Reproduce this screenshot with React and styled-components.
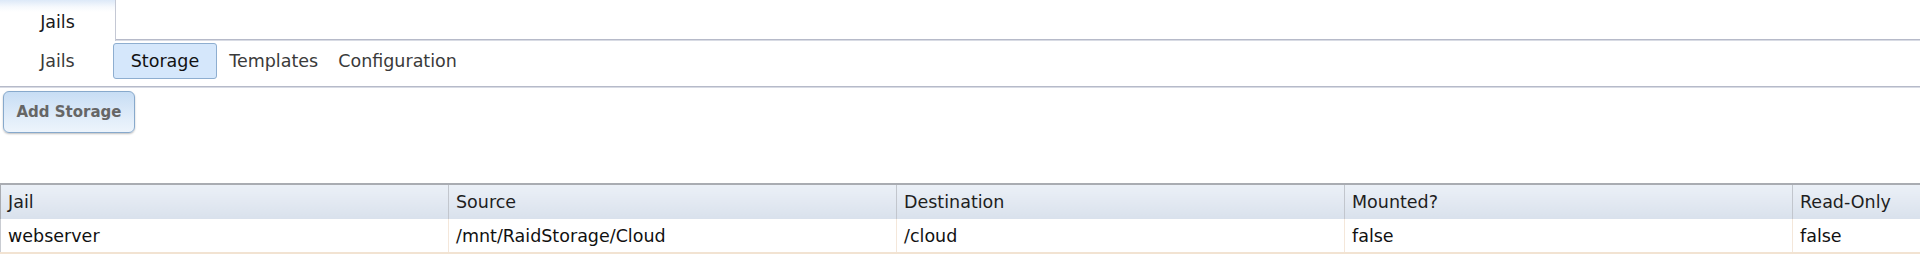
import React from 'react';
import styled, { createGlobalStyle } from 'styled-components';

const GlobalStyle = createGlobalStyle`
  html, body {
    margin: 0;
    padding: 0;
    background: #fff;
    overflow: hidden;
  }
  body {
    font-family: "DejaVu Sans", Verdana, sans-serif;
    font-size: 17.5px;
    color: #222;
  }
`;

const Page = styled.div`
  width: 1920px;
  height: 264px;
  overflow: hidden;
`;

const TabStrip = styled.div`
  display: flex;
  height: 41px;
`;

const Tab = styled.div`
  width: 116px;
  display: flex;
  align-items: center;
  justify-content: center;
  padding-top: 2px;
  box-sizing: border-box;
  border-right: 1px solid #c4c8d4;
  background: linear-gradient(#dde9f8 0px, #f6f9fd 7px, #fff 12px);
  color: #1a1a1a;
`;

const TabFill = styled.div`
  flex: 1;
  border-bottom: 1px solid #b6bac9;
  box-shadow: 0 1px 0 #d8dbe4;
  margin-bottom: 1px;
`;

const SubNav = styled.nav`
  display: flex;
  align-items: flex-start;
  height: 46px;
  padding: 2px 0 0 30px;
  box-sizing: border-box;
  border-bottom: 1px solid #b6bac9;
  box-shadow: 0 1px 0 #d8dbe4;
`;

const NavItem = styled.div`
  height: 36px;
  line-height: 35px;
  box-sizing: border-box;
  padding: 0 ${p => (p.$active ? '17px' : '9px')};
  margin-left: ${p => p.$gap || 0}px;
  color: ${p => (p.$active ? '#111' : '#3a3a3a')};
  border: 1px solid ${p => (p.$active ? '#8eaed0' : 'transparent')};
  border-radius: 3px;
  background: ${p => (p.$active ? '#d5e7fb' : 'transparent')};
`;

const Toolbar = styled.div`
  padding: 4px 0 0 3px;
  height: 96px;
  box-sizing: border-box;
`;

const AddButton = styled.button`
  width: 132px;
  height: 42px;
  font-family: inherit;
  font-size: 15px;
  font-weight: bold;
  color: #666;
  border: 1px solid #87a9cc;
  border-radius: 6px;
  background: linear-gradient(#c7ddf4, #e3eefa 70%, #edf4fc);
  box-shadow: 0 1px 2px rgba(0, 0, 0, 0.25);
  padding: 0;
`;

const Table = styled.table`
  border-collapse: collapse;
  table-layout: fixed;
  width: 2240px;
`;

const Th = styled.th`
  height: 34px;
  padding: 0 7px;
  text-align: left;
  font-weight: normal;
  color: #1e1e1e;
  background: linear-gradient(#ebf0f7, #d9e1ec);
  border-top: 2px solid #a9acb2;
  border-right: 1px solid #c2c6cd;
  &:first-child {
    border-left: 1px solid #a9acb2;
  }
`;

const Td = styled.td`
  height: 33px;
  padding: 0 7px;
  color: #111;
  border-bottom: 2px solid #f2e3d2;
  border-right: 1px solid #f4e7da;
  &:first-child {
    border-left: 1px solid #c9ccd2;
  }
`;

const columns = ['Jail', 'Source', 'Destination', 'Mounted?', 'Read-Only'];

const rows = [
  { jail: 'webserver', source: '/mnt/RaidStorage/Cloud', destination: '/cloud', mounted: 'false', readonly: 'false' },
];

export default function App() {
  return (
    <Page>
      <GlobalStyle />
      <TabStrip>
        <Tab>Jails</Tab>
        <TabFill />
      </TabStrip>
      <SubNav>
        <NavItem>Jails</NavItem>
        <NavItem $active $gap={28}>Storage</NavItem>
        <NavItem $gap={2}>Templates</NavItem>
        <NavItem>Configuration</NavItem>
      </SubNav>
      <Toolbar>
        <AddButton>Add Storage</AddButton>
      </Toolbar>
      <Table>
        <colgroup>
          {columns.map(c => <col key={c} style={{ width: 448 }} />)}
        </colgroup>
        <thead>
          <tr>
            {columns.map(c => <Th key={c}>{c}</Th>)}
          </tr>
        </thead>
        <tbody>
          {rows.map((r, i) => (
            <tr key={i}>
              <Td>{r.jail}</Td>
              <Td>{r.source}</Td>
              <Td>{r.destination}</Td>
              <Td>{r.mounted}</Td>
              <Td>{r.readonly}</Td>
            </tr>
          ))}
        </tbody>
      </Table>
    </Page>
  );
}
